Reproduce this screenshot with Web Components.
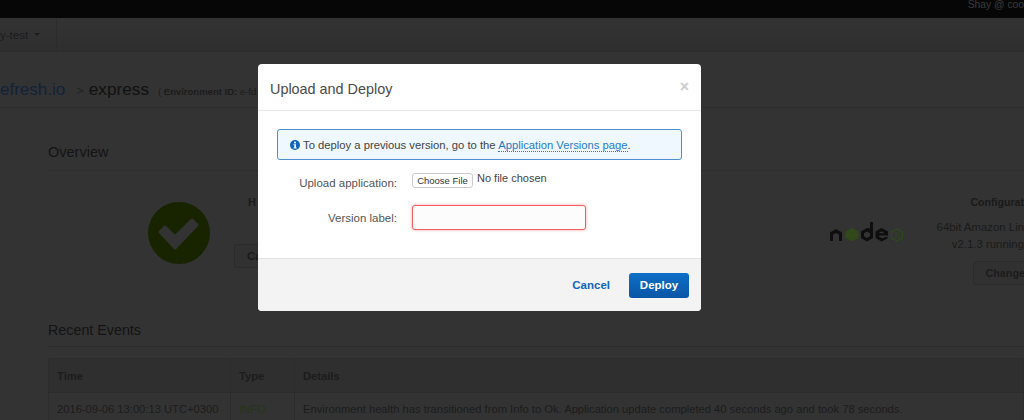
<!DOCTYPE html>
<html>
<head>
<meta charset="utf-8">
<title>Upload and Deploy</title>
<style>
  html,body{margin:0;height:420px;overflow:hidden;background:#333}
  body{font-family:"Liberation Sans",Arial,sans-serif;position:relative}
</style>
</head>
<body>
<top-bar user="Shay @ coo"></top-bar>
<sub-nav label="y-test"></sub-nav>
<env-header app="efresh.io" env="express" env-id="e-fd"></env-header>
<overview-panel></overview-panel>
<events-table></events-table>
<deploy-modal></deploy-modal>

<script>
// small helper, every element is just a template + open shadow root
function el(name, html, setup){
  const tpl=document.createElement('template');
  tpl.innerHTML=html;
  customElements.define(name, class extends HTMLElement{
    constructor(){
      super();
      this.attachShadow({mode:'open'}).appendChild(tpl.content.cloneNode(true));
    }
    connectedCallback(){ if(setup) setup(this.shadowRoot,this); }
  });
}

el('top-bar',`
  <style>
    :host{display:flex;justify-content:flex-end;height:18px;background:#060606;overflow:hidden}
    span{font-size:10.300px;line-height:9px;color:#3c3c3c;white-space:nowrap}
  </style>
  <span id="u"></span>
`,(r,h)=>{ r.getElementById('u').textContent=h.getAttribute('user'); });

el('sub-nav',`
  <style>
    :host{display:flex;height:34px;background:linear-gradient(#333,#2f2f2f);border-bottom:1px solid #2c2c2c;box-sizing:border-box}
    .tab{display:flex;align-items:center;width:56px;border-right:1px solid #2c2c2c;font-size:11.500px;color:#1c1c1c}
    i{width:0;height:0;border:3px solid transparent;border-top:3.500px solid #1c1c1c;border-bottom:0;margin-left:6px}
  </style>
  <div class="tab"><span id="l"></span><i></i></div>
`,(r,h)=>{ r.getElementById('l').textContent=h.getAttribute('label'); });

el('env-header',`
  <style>
    :host{display:flex;align-items:baseline;height:56px;box-sizing:border-box;padding-top:27px;border-bottom:1px solid #2c2c2c;overflow:hidden;white-space:nowrap}
    .app{font-size:17px;color:#12223a}
    .sep{font-size:13px;color:#222;margin:0 5px 0 11px}
    .env{font-size:17.200px;color:#111}
    .id{font-size:9.500px;color:#1c1c1c;margin-left:9px}
    b{font-weight:700}
  </style>
  <span class="app" id="a"></span><span class="sep">&gt;</span><span class="env" id="e"></span>
  <span class="id">( <b>Environment ID:</b> <span id="i"></span></span>
`,(r,h)=>{
  r.getElementById('a').textContent=h.getAttribute('app');
  r.getElementById('e').textContent=h.getAttribute('env');
  r.getElementById('i').textContent=h.getAttribute('env-id');
});

el('dim-button',`
  <style>
    :host{display:inline-block;box-sizing:border-box;height:24px;padding:0 12px;line-height:22px;border:1px solid #2b2b2b;border-radius:3px;background:#313131;font-size:11.500px;font-weight:700;color:#1c1c1c;white-space:nowrap}
  </style>
  <slot></slot>
`);

el('overview-panel',`
  <style>
    :host{display:block;height:214px;box-sizing:border-box;padding:36px 0 0 48px;overflow:hidden}
    h2{margin:0;height:26px;font-size:14.500px;font-weight:400;line-height:17px;color:#141414;border-bottom:1px solid #2d2d2d}
    .cols{display:flex;margin-top:24px;white-space:nowrap}
    .check{margin:7px 0 0 100px;width:62px;height:62px;flex:none}
    .health{margin:0 0 0 24px;width:150px;font-size:11px;color:#1a1a1a}
    .health b{display:block;margin:0 0 0 14px;line-height:14px}
    .health dim-button{margin-top:35px}
    .node{flex:none;margin:27px 0 0 446px;width:74px;height:20px}
    .config{flex:1;overflow:hidden;font-size:11.400px;line-height:17px;color:#1a1a1a;text-align:right}
    .config b{display:block;font-size:10.600px;line-height:14px;margin-bottom:10px}
    .config dim-button{margin:8px -13px 0 0;padding:0 11px;font-size:10.800px}
  </style>
  <h2>Overview</h2>
  <div class="cols">
    <svg class="check" viewBox="0 0 62 62">
      <circle cx="31" cy="31" r="31" fill="#182400"/>
      <path d="M12 30L17 25L27 34.500L44 18L49 23L27 46Z" fill="#333" stroke="#333" stroke-width="3" stroke-linejoin="round"/>
    </svg>
    <div class="health"><b>H</b><dim-button>Ca</dim-button></div>
    <svg class="node" viewBox="0 0 74 20">
      <path d="M0 10.500L6 7L12 10.500V19H9V12.500L6 11L3 12.500V19H0Z" fill="#0e0e0e"/>
      <path d="M22 6L28.500 9.500V16L22 19.500L15.500 16V9.500Z" fill="#30481a"/>
      <path d="M43 0H40V6.500L37 6L31 9.500V16L37 19.500L43 16ZM37 9.500L40 11.200V14.300L37 16L34 14.300V11.200Z" fill="#0e0e0e" fill-rule="evenodd"/>
      <path d="M51.500 6L58 9.500V13.500L49 13.500V14.500L52 16.300L57.500 14.500V16.500L51.500 19.500L45.500 16V9.500ZM51.500 9.200L49 10.700V11.300H54V10.700Z" fill="#0e0e0e" fill-rule="evenodd"/>
      <path d="M67 7L72.500 10V16L67 19L61.500 16V10Z" fill="none" stroke="#30481a" stroke-width="1.300"/>
      <path d="M66 10V15.500Q66 17 64.500 16.300M69.500 11.500Q68 11 68 12.500Q68 13.300 69 13.600Q70 14.100 69 15.300Q68.300 15.600 67.500 15.200" fill="none" stroke="#30481a" stroke-width=".8"/>
    </svg>
    <div class="config"><b>Configurat</b>64bit Amazon Lin<br>v2.1.3 running<br><dim-button>Change</dim-button></div>
  </div>
`);

el('events-table',`
  <style>
    :host{display:block;padding-left:48px;overflow:hidden}
    h2{margin:0;height:25px;box-sizing:border-box;font-size:14.300px;font-weight:400;line-height:17px;color:#141414;border-bottom:1px solid #2c2c2c}
    .t{display:grid;grid-template-columns:182px 64px 1fr;margin-top:11px;font-size:11.200px;color:#1c1c1c;border:1px solid #2c2c2c;border-right:0}
    .t>div{display:flex;align-items:center;padding-left:8px;border-right:1px solid #2c2c2c}
    .h{height:33px;font-weight:700;background:#2f2f2f;border-bottom:1px solid #2c2c2c}
    .c{height:31px;white-space:nowrap}
    .info{color:#26351a}
  </style>
  <h2>Recent Events</h2>
  <div class="t">
    <div class="h">Time</div><div class="h">Type</div><div class="h">Details</div>
    <div class="c">2016-09-06 13:00:13 UTC+0300</div><div class="c info">INFO</div>
    <div class="c">Environment health has transitioned from Info to Ok. Application update completed 40 seconds ago and took 78 seconds.</div>
  </div>
`);

el('info-alert',`
  <style>
    :host{display:flex;align-items:center;height:31px;box-sizing:border-box;padding-left:12px;border:1px solid #4f8fd0;border-radius:3px;background:#eff7ff;font-size:11.250px;color:#444}
    svg{width:10px;height:10px;margin-right:3px;flex:none}
    ::slotted(a){color:#2a7bc9;text-decoration:none;border-bottom:1px dotted #2a7bc9}
  </style>
  <svg viewBox="0 0 10 10"><circle cx="5" cy="5" r="5" fill="#1166bb"/><rect x="4" y="1.700" width="2" height="1.700" fill="#eff7ff"/><path d="M3.500 4.200H6V7.500H6.700V8.400H3.500V7.500H4.200V5.100H3.500Z" fill="#eff7ff"/></svg>
  <span><slot></slot></span>
`);

el('form-row',`
  <style>
    :host{display:flex;align-items:center;gap:15px}
    label{width:120px;line-height:14px;text-align:right;font-size:11.500px;color:#555;flex:none}
  </style>
  <label id="l"></label><slot></slot>
`,(r,h)=>{ r.getElementById('l').textContent=h.getAttribute('label'); });

el('deploy-modal',`
  <style>
    :host{position:absolute;left:258px;top:64px;width:443px;height:247px;display:flex;flex-direction:column;background:#fff;border-radius:4px;overflow:hidden;color:#444}
    header{display:flex;justify-content:space-between;align-items:center;height:47px;box-sizing:border-box;padding:3px 12px 0;border-bottom:1px solid #e8e8e8}
    h1{margin:0;font-size:14.400px;font-weight:400;color:#4a4a4a}
    .x{font-size:16px;font-weight:700;color:#ccc;line-height:16px;margin-top:-3px}
    main{flex:1;padding:18px 19px 0}
    .rows{margin-top:13px;display:flex;flex-direction:column;gap:15px}
    .file{display:flex;align-items:flex-start;height:17px;color:#444}
    .choose{box-sizing:border-box;height:15px;width:61px;text-align:center;line-height:13px;font-size:9.500px;color:#333;background:#fff;border:1px solid #ccc;border-radius:3px;margin-right:4px}
    .nofile{line-height:11px;font-size:11px}
    .input{width:174px;height:25px;box-sizing:border-box;border:1px solid #f06060;border-radius:3px;background:#fcfcfc;box-shadow:0 0 3px rgba(240,90,90,.6)}
    footer{display:flex;justify-content:flex-end;align-items:center;height:53px;box-sizing:border-box;padding:0 12px;gap:19px;background:#f3f3f3;border-top:1px solid #e2e2e2}
    .cancel{font-size:11.500px;font-weight:700;color:#1166bb}
    .deploy{width:60px;height:25px;line-height:25px;text-align:center;border-radius:3px;background:linear-gradient(#0d6fc6,#0a55a5);color:#fff;font-size:11.500px;font-weight:700}
  </style>
  <header><h1>Upload and Deploy</h1><span class="x">×</span></header>
  <main>
    <info-alert>To deploy a previous version, go to the <a>Application Versions page</a>.</info-alert>
    <div class="rows">
      <form-row label="Upload application:" style="align-items:flex-end"><div class="file"><span class="choose">Choose File</span><span class="nofile">No file chosen</span></div></form-row>
      <form-row label="Version label:"><div class="input"></div></form-row>
    </div>
  </main>
  <footer><span class="cancel">Cancel</span><span class="deploy">Deploy</span></footer>
`);
</script>
</body>
</html>
